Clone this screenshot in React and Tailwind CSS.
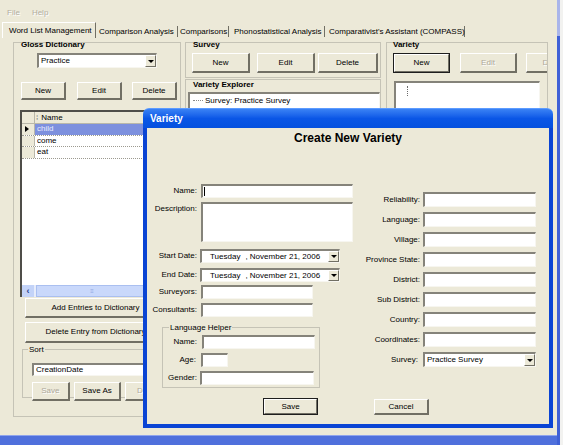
import React from 'react';

const raised =
  'bg-[#ece9d8] border-t border-l border-t-white border-l-white border-r-2 border-b-2 border-r-[#716f64] border-b-[#716f64]';
const sunken =
  'bg-white border-t-2 border-l-2 border-t-[#85837a] border-l-[#85837a] border-r border-b border-r-[#f7f6f0] border-b-[#f7f6f0]';
const off = 'text-[#aca899] [text-shadow:1px_1px_0_#fff]';

function Btn({ children, className = '', disabled, def }) {
  if (def) {
    return (
      <div className={`flex items-center justify-center bg-[#ece9d8] border border-[#1e1e1e] ${className}`}>
        <div className="w-full h-full flex items-center justify-center border-t border-l border-t-white border-l-white border-r border-b border-r-[#716f64] border-b-[#716f64]">
          {children}
        </div>
      </div>
    );
  }
  return (
    <div className={`flex items-center justify-center ${raised} ${disabled ? off : ''} ${className}`}>
      {children}
    </div>
  );
}

function Arrow() {
  return (
    <div className="w-[11px] h-full shrink-0 flex items-center justify-center bg-[#ece9d8] border-t border-l border-t-white border-l-white border-r border-b border-r-[#716f64] border-b-[#716f64]">
      <div className="w-0 h-0 border-l-[3px] border-r-[3px] border-t-[3px] border-l-transparent border-r-transparent border-t-black" />
    </div>
  );
}

function Combo({ value, className = '' }) {
  return (
    <div className={`${sunken} flex items-center ${className}`}>
      <span className="flex-1 pl-[2px] truncate">{value}</span>
      <Arrow />
    </div>
  );
}

function DatePick() {
  return (
    <div className={`${sunken} w-[140px] h-[14px] flex items-center`}>
      <span className="pl-[8px] mr-[5px]">Tuesday</span>
      <span className="flex-1">, November 21, 2006</span>
      <Arrow />
    </div>
  );
}

function Row({ label, lw, gap, children, className = '' }) {
  return (
    <div className={`flex items-center ${className}`}>
      <span className={`text-right shrink-0 ${lw}`}>{label}</span>
      <div className={`flex ${gap}`}>{children}</div>
    </div>
  );
}

function GlossGrid() {
  const rows = ['child', 'come', 'eat'];
  return (
    <div className="ml-[6px] mt-[10px] w-[156px] h-[187px] bg-white border-t-2 border-l-2 border-t-[#4f4e49] border-l-[#4f4e49] flex flex-col">
      <div className="h-[12px] flex bg-[#ece9d8] border-b border-[#b9b7aa]">
        <div className="w-[13px] border-r border-[#b9b7aa]" />
        <span className="pl-[1px] text-[#777] leading-[11px]">⁞</span>
        <span className="pl-[3px] leading-[11px]">Name</span>
      </div>
      {rows.map((r, i) => (
        <div key={r} className="h-[11.5px] flex border-b border-dotted border-[#9c9a90]">
          <div className="w-[13px] bg-[#ece9d8] border-r border-[#b9b7aa] flex items-center pl-[3px]">
            {i === 0 && (
              <div className="w-0 h-0 border-t-[3px] border-b-[3px] border-l-[4px] border-t-transparent border-b-transparent border-l-black" />
            )}
          </div>
          <div className={`flex-1 flex items-center pl-[2px] ${i === 0 ? 'bg-[#7d90de] text-[#e8ecff]' : ''}`}>{r}</div>
        </div>
      ))}
      <div className="flex-1" />
      <div className="h-[12px] flex bg-[#e6ecfb]">
        <div className="w-[12px] flex items-center justify-center bg-[#c3d3f8] text-[#2a3e8c] font-bold text-[9px]">‹</div>
        <div className="ml-[2px] w-[112px] bg-[#c9d8fb] border border-[#aabff0] flex items-center justify-center text-[#8fa6e0] text-[6px]">
          ≡
        </div>
      </div>
    </div>
  );
}

function Dialog() {
  const right = ['Reliability:', 'Language:', 'Village:', 'Province State:', 'District:', 'Sub District:', 'Country:', 'Coordinates:'];
  return (
    <div className="absolute left-[143px] top-[108px] w-[410px] h-[320px] flex flex-col">
      <div className="h-[20px] rounded-t-[6px] bg-gradient-to-b from-[#3a82f5] via-[#0a56e6] to-[#0551df] flex items-center pl-[7px] border-t border-[#5c9bff]">
        <span className="text-white font-bold text-[10px] leading-[12px]">Variety</span>
      </div>
      <div className="flex-1 bg-[#ece9d8] border-l-[4px] border-r-[4px] border-b-[4px] border-[#0a44d4] flex flex-col">
        <div className="mt-[3px] h-[14px] text-center text-[12px] leading-[14px] font-bold">Create New Variety</div>
        <div className="mt-[39px] flex items-start">
          <div className="ml-[3px] w-[205px] flex flex-col">
            <Row label="Name:" lw="w-[47px]" gap="ml-[4px]">
              <div className={`${sunken} w-[152px] h-[14px] flex items-center`}>
                <div className="ml-[1px] w-px h-[9px] bg-black" />
              </div>
            </Row>
            <div className="mt-[4px] flex items-start">
              <span className="w-[47px] text-right mt-[2px]">Description:</span>
              <div className={`${sunken} ml-[4px] w-[152px] h-[40px]`} />
            </div>
            <Row label="Start Date:" lw="w-[47px]" gap="ml-[3px]" className="mt-[7px]">
              <DatePick />
            </Row>
            <Row label="End Date:" lw="w-[47px]" gap="ml-[3px]" className="mt-[5px]">
              <DatePick />
            </Row>
            <Row label="Surveyors:" lw="w-[47px]" gap="ml-[4px]" className="mt-[3px]">
              <div className={`${sunken} w-[112px] h-[14px]`} />
            </Row>
            <Row label="Consultants:" lw="w-[47px]" gap="ml-[4px]" className="mt-[4px]">
              <div className={`${sunken} w-[112px] h-[14px]`} />
            </Row>
            <div className="mt-[10px] ml-[12px] w-[158px] h-[61px] border border-[#c5c3b6] flex flex-col">
              <span className="-mt-[5px] ml-[6px] px-[1px] w-fit bg-[#ece9d8]">Language Helper</span>
              <Row label="Name:" lw="w-[34px]" gap="ml-[5px]" className="mt-[2px]">
                <div className={`${sunken} w-[113px] h-[14px]`} />
              </Row>
              <Row label="Age:" lw="w-[33px]" gap="ml-[5px]" className="mt-[4px]">
                <div className={`${sunken} w-[27px] h-[14px]`} />
              </Row>
              <Row label="Gender:" lw="w-[34px]" gap="ml-[3px]" className="mt-[4px]">
                <div className={`${sunken} w-[114px] h-[14px]`} />
              </Row>
            </div>
          </div>
          <div className="mt-[8px] flex flex-col gap-[5px]">
            {right.map((l) => (
              <Row key={l} label={l} lw="w-[65px]" gap="ml-[3px]">
                <div className={`${sunken} w-[113px] h-[15px]`} />
              </Row>
            ))}
            <Row label="Survey:" lw="w-[63px]" gap="ml-[5px]">
              <Combo value="Practice Survey" className="w-[113px] h-[15px]" />
            </Row>
          </div>
        </div>
        <div className="mt-[10px] flex">
          <Btn def className="ml-[116px] w-[55px] h-[17px]">Save</Btn>
          <Btn className="ml-[56px] mt-[1px] w-[55px] h-[16px]">Cancel</Btn>
        </div>
      </div>
    </div>
  );
}

export default function App() {
  const tabs = [
    { label: 'Comparison Analysis', w: 'w-[82px] pl-[3px]' },
    { label: 'Comparisons', w: 'w-[51px] pl-[2px]' },
    { label: 'Phonostatistical Analysis', w: 'w-[96px] pl-[5px]' },
    { label: "Comparativist's Assistant (COMPASS)", w: 'w-[140px] pl-[4px]' },
  ];
  return (
    <div className="w-[563px] h-[445px] relative overflow-hidden flex bg-[#ece9d8] text-black text-[8px] leading-[10px] font-['Liberation_Sans',Arial,sans-serif]">
      <div className="w-[557px] flex flex-col">
        {/* menu */}
        <div className="h-[21px] flex gap-[12px] pl-[7px] pt-[8px] text-[#b2ae9e] [text-shadow:1px_1px_0_#fff]">
          <span>File</span>
          <span>Help</span>
        </div>
        {/* tabs */}
        <div className="h-[17px] flex">
          <div className="ml-[2px] mt-[1px] w-[94px] pl-[6px] flex items-center border-t border-l border-t-white border-l-white border-r border-r-[#716f64]">
            Word List Management
          </div>
          {tabs.map((t) => (
            <div key={t.label} className={`mt-[5px] mb-[1px] flex items-center border-r border-[#716f64] whitespace-nowrap ${t.w}`}>
              {t.label}
            </div>
          ))}
        </div>
        {/* tab page */}
        <div className="flex-1 flex items-start pt-[4px]">
          {/* gloss dictionary */}
          <div className="ml-[13px] w-[168px] h-[375px] border border-[#c5c3b6] flex flex-col">
            <span className="-mt-[3px] ml-[7px] font-bold">Gloss Dictionary</span>
            <Combo value="Practice" className="mt-[3px] ml-[23px] w-[120px] h-[15px]" />
            <div className="mt-[14px] ml-[7px] flex">
              <Btn className="w-[45px] h-[18px]">New</Btn>
              <Btn className="ml-[11px] w-[45px] h-[18px]">Edit</Btn>
              <Btn className="ml-[10px] w-[45px] h-[18px]">Delete</Btn>
            </div>
            <GlossGrid />
            <Btn className="mt-[1px] ml-[11px] w-[142px] h-[20px]">Add Entries to Dictionary</Btn>
            <Btn className="mt-[4px] ml-[11px] w-[142px] h-[21px]">Delete Entry from Dictionary</Btn>
            <div className="mt-[6px] ml-[8px] w-[152px] h-[49px] border border-[#c5c3b6] flex flex-col">
              <span className="-mt-[5px] ml-[5px] px-[1px] w-fit bg-[#ece9d8]">Sort</span>
              <Combo value="CreationDate" className="mt-[8px] ml-[9px] w-[128px] h-[14px]" />
              <div className="mt-[6px] ml-[9px] flex">
                <Btn disabled className="w-[38px] h-[19px]">Save</Btn>
                <Btn className="ml-[4px] w-[48px] h-[19px]">Save As</Btn>
                <Btn disabled className="ml-[4px] w-[48px] h-[19px]">Delete</Btn>
              </div>
            </div>
          </div>
          {/* survey */}
          <div className="ml-[4px] w-[196px] flex flex-col">
            <div className="h-[36px] border border-[#c5c3b6] flex flex-col">
              <span className="-mt-[3px] ml-[7px] font-bold">Survey</span>
              <div className="mt-[3px] ml-[6px] flex">
                <Btn className="w-[58px] h-[20px]">New</Btn>
                <Btn className="ml-[7px] w-[58px] h-[20px]">Edit</Btn>
                <Btn className="ml-[3px] w-[60px] h-[20px]">Delete</Btn>
              </div>
            </div>
            <div className="mt-[1px] h-[320px] border border-[#c5c3b6] flex flex-col">
              <span className="ml-[7px] font-bold">Variety Explorer</span>
              <div className={`${sunken} mt-[2px] ml-[2px] w-[192px] h-[300px] flex items-start pt-[2px]`}>
                <div className="mt-[4px] ml-[3px] w-[10px] border-t border-dotted border-[#8a8a8a]" />
                <span className="ml-[2px]">Survey: Practice Survey</span>
              </div>
            </div>
          </div>
          {/* variety */}
          <div className="ml-[5px] w-[162px] h-[360px] border border-[#c5c3b6] flex flex-col">
            <span className="-mt-[3px] ml-[6px] font-bold">Variety</span>
            <div className="mt-[3px] ml-[6px] w-[154px] overflow-hidden flex">
              <Btn def className="w-[57px] h-[20px] shrink-0">New</Btn>
              <Btn disabled className="ml-[10px] w-[57px] h-[20px] shrink-0">Edit</Btn>
              <Btn disabled className="ml-[9px] w-[57px] h-[20px] shrink-0">Delete</Btn>
            </div>
            <div className={`${sunken} mt-[8px] ml-[7px] w-[146px] h-[300px] pl-[11px] pt-[3px]`}>
              <div className="w-0 h-[10px] border-l border-dotted border-[#6a6a6a]" />
            </div>
          </div>
        </div>
        {/* window frame bottom */}
        <div className="h-[10px] bg-[#4f70dc] border-t border-[#8fa4ec]" />
      </div>
      <div className="w-[3px] flex flex-col">
        <div className="h-[36px] bg-[#a9b5ea]" />
        <div className="flex-1 bg-[#3f60d6]" />
      </div>
      <div className="flex-1 bg-[#f2f2f0]" />
      <Dialog />
    </div>
  );
}
